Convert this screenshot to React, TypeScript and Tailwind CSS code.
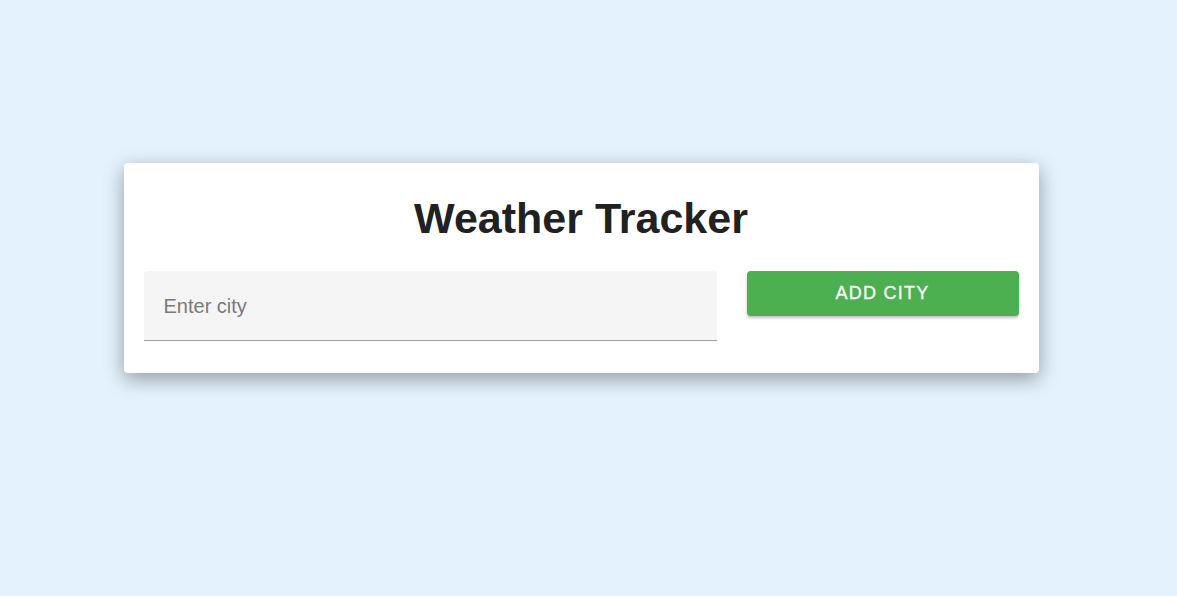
export default function App() {
  return (
    <div className="min-h-screen w-full bg-[#e3f2fd] pt-[163px] pr-[15px] font-['Liberation_Sans',Arial,sans-serif]">
      <div className="mx-auto w-[915px] rounded bg-white px-5 pt-5 pb-8 shadow-[0_6px_20px_rgba(0,0,0,0.36)]">
        <h1 className="mb-[18px] text-center text-[43px] leading-[70px] font-bold text-[#212121]">
          Weather Tracker
        </h1>
        <div className="flex items-start gap-[30px]">
          <div className="flex-1">
            <input
              type="text"
              placeholder="Enter city"
              className="h-[70px] w-full rounded-t border-b border-[#9e9e9e] bg-[#f5f5f5] px-5 pt-[2px] text-[20px] text-[#212121] outline-none placeholder:text-[#7a7a7a]"
            />
          </div>
          <button className="h-[45px] w-[272px] rounded bg-[#4caf50] text-[18px] tracking-[0.07em] text-white shadow-[0_2px_3px_rgba(0,0,0,0.25)] [-webkit-text-stroke:0.3px_white]">
            ADD CITY
          </button>
        </div>
      </div>
    </div>
  );
}
